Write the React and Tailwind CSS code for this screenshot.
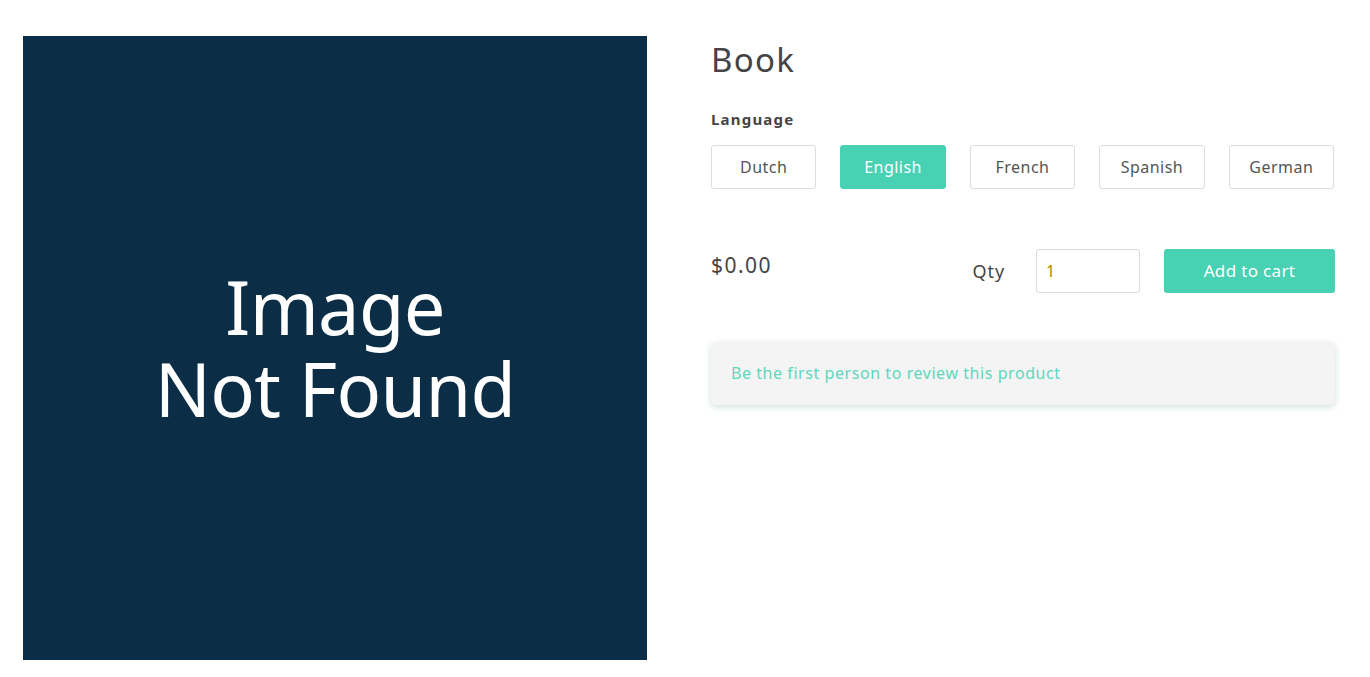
export default function App() {
  const langs = ["Dutch", "English", "French", "Spanish", "German"];
  return (
    <div className="w-[1370px] h-[677px] bg-white flex gap-[64px] pl-[23px] pt-[36px]" style={{ fontFamily: '"Noto Sans", "Open Sans", sans-serif' }}>
      <div className="w-[624px] h-[624px] bg-[#0b2d45] flex items-center justify-center shrink-0">
        <div className="text-white text-[74px] leading-[82px] text-center font-normal tracking-[-0.01em]" style={{ fontFamily: '"Noto Sans", sans-serif' }}>
          <div>Image</div>
          <div>Not Found</div>
        </div>
      </div>
      <div className="w-[624px] flex flex-col text-[#444] tracking-[0.03em]">
        <h1 className="text-[33px] leading-[48px] font-normal text-[#444] tracking-[0.04em]">Book</h1>
        <div className="mt-[25px] text-[15px] font-bold leading-[20px] tracking-[0.08em]">Language</div>
        <div className="mt-[16px] grid grid-cols-5 gap-[24px] w-[623px]">
          {langs.map((l) => (
            <button
              key={l}
              className={
                l === "English"
                  ? "h-[44px] rounded-[3px] bg-[#48d1b2] text-white text-[16px] border border-[#48d1b2] tracking-[0.03em]"
                  : "h-[44px] rounded-[3px] bg-white text-[#555] text-[16px] border border-[#dcdcdc] tracking-[0.03em]"
              }
            >
              {l}
            </button>
          ))}
        </div>
        <div className="mt-[60px] flex items-start">
          <div className="text-[21px] leading-[28px] mt-[2px] text-[#444] tracking-[0.07em]">$0.00</div>
          <div className="ml-auto flex items-center">
            <span className="text-[18px] text-[#444] mr-[31px] tracking-[0.05em]">Qty</span>
            <input
              defaultValue="1"
              className="w-[104px] h-[44px] rounded-[3px] border border-[#dcdcdc] px-[9px] text-[16px] text-[#b8860b] outline-none"
            />
            <button className="ml-[24px] w-[171px] h-[44px] rounded-[3px] bg-[#48d1b2] text-white text-[17px] tracking-[0.02em]">
              Add to cart
            </button>
          </div>
        </div>
        <div className="mt-[49px] w-[624px] h-[63px] rounded-[5px] bg-[#f4f4f4] shadow-[0_2px_6px_rgba(72,140,130,0.25)] flex items-center px-[20px] pb-[2px]">
          <span className="text-[16px] text-[#5fd7bd] tracking-[0.035em]">Be the first person to review this product</span>
        </div>
      </div>
    </div>
  );
}
